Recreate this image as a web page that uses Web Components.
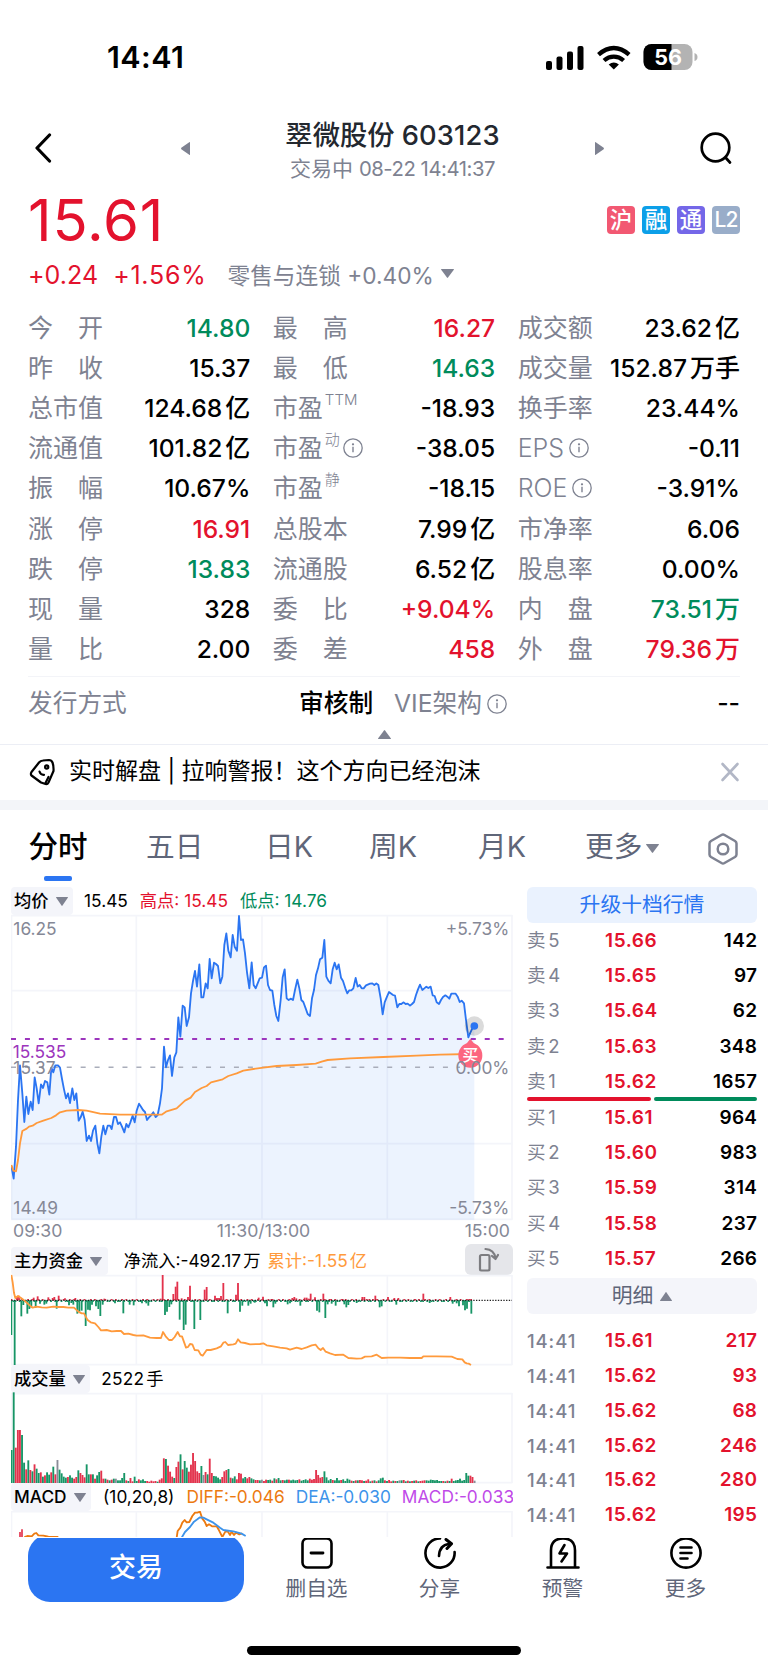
<!DOCTYPE html>
<html lang="zh-CN">
<head>
<meta charset="utf-8">
<title>翠微股份 603123</title>
<style>
  :root {
    --red: #e3122d;
    --green: #008b5b;
    --blue: #2b75f2;
    --grey: #7e8291;
    --slate: #5f6679;
    --line: #f4f5fa;
  }
  html, body { margin: 0; padding: 0; }
  body {
    width: 768px;
    height: 1669px;
    overflow: hidden;
    background: #fff;
    color: #000;
    font-family: Inter, "Noto Sans CJK SC", sans-serif;
    font-size: 25px;
  }
</style>
</head>
<body>
<stock-page></stock-page>

<script>
const define = (name, html, setup) => {
  const tpl = document.createElement('template');
  tpl.innerHTML = html;
  customElements.define(name, class extends HTMLElement {
    constructor() {
      super();
      this.attachShadow({ mode: 'open' }).appendChild(tpl.content.cloneNode(true));
    }
    connectedCallback() {
      if (setup) setup(this.shadowRoot, this);
    }
  });
};

// --- Small pieces ---

define('info-icon', `
  <style>:host { display: inline-flex; } svg { display: block; }</style>
  <svg width="20" height="20" viewBox="0 0 20 20" fill="none" stroke="#7e8291" stroke-width="1.3">
    <circle cx="10" cy="10" r="9.2"/><path d="M10 8.7V14.2" stroke-width="1.4"/><circle cx="10" cy="6.3" r=".5"/>
  </svg>`);

define('tri-mark', `
  <style>
    :host { display: inline-block; flex: none; }
    svg { display: block; width: 100%; height: 100%; }
  </style>
  <svg viewBox="0 0 12 9" preserveAspectRatio="none"><path fill="#7e8291"/></svg>`,
(root, el) => {
  const paths = {
    down: 'M.4 0H11.6Q12.2 0 11.8.7L6.5 8.6Q6 9.2 5.5 8.6L.2.7Q-.2 0 .4 0Z',
    up: 'M.4 9H11.6Q12.2 9 11.8 8.3L6.5.4Q6-.2 5.5.4L.2 8.3Q-.2 9 .4 9Z',
    left: 'M12 .4V8.6Q12 9.2 11 8.8L.4 5Q-.2 4.5.4 4L11 .2Q12-.2 12 .4Z',
    right: 'M0 .4V8.6Q0 9.2 1 8.8L11.6 5Q12.2 4.5 11.6 4L1 .2Q0-.2 0 .4Z'
  };
  root.querySelector('path').setAttribute('d', paths[el.getAttribute('dir') || 'down']);
});

define('market-badge', `
  <style>
    :host {
      display: flex; align-items: center; justify-content: center;
      width: 28px; height: 28px; border-radius: 4px;
      color: #fff; font-size: 22.5px; font-weight: 500; line-height: 26px;
      padding-bottom: 1px; box-sizing: border-box;
    }
  </style>
  <slot></slot>`);

define('pane-label', `
  <style>
    :host {
      display: inline-flex; align-items: center; gap: 7px; height: 28px;
      padding: 0 5.5px 0 3px; background: #f4f5fa; border-radius: 4px;
      font-size: 17.3px; font-weight: 500; line-height: 28px; flex: none;
    }
    tri-mark { width: 12px; height: 9px; }
    span { margin-top: -1px; }
  </style>
  <span><slot></slot></span><tri-mark></tri-mark>`);

// --- Status bar ---

define('status-bar', `
  <style>
    :host { display: flex; align-items: center; height: 114px; padding: 0 71px 0 107px; box-sizing: border-box; justify-content: space-between; }
    time { font-size: 30.5px; font-weight: 600; letter-spacing: .4px; margin-top: -1px; }
    svg { display: block; margin-top: -1px; }
  </style>
  <time>14:41</time>
  <svg width="153" height="28" viewBox="0 0 153 28" style="margin-right:-1px">
    <rect x="1" y="18" width="6" height="9" rx="2"/>
    <rect x="11.5" y="13.5" width="6" height="13.5" rx="2"/>
    <rect x="22" y="8.5" width="6" height="18.5" rx="2"/>
    <rect x="32.5" y="3" width="6" height="24" rx="2"/>
    <g fill="none" stroke="#000" stroke-width="4.3">
      <path d="M53.5 11.6Q61 5 68.8 5Q76.6 5 84.1 11.6"/>
      <path d="M59 17.5Q63.5 13.6 68.8 13.6Q74.1 13.6 78.6 17.5"/>
    </g>
    <path d="M68.8 26.5L63.7 21.4Q68.8 17.4 73.9 21.4Z"/>
    <clipPath id="cell"><rect x="98.5" y="1" width="49" height="26" rx="8"/></clipPath>
    <g clip-path="url(#cell)"><rect x="98" width="51" height="28" fill="#b3b3b3"/><rect x="98" width="28.5" height="28"/></g>
    <path d="M149.5 10Q152.5 11 152.5 14T149.5 18Z" fill="#b3b3b3"/>
    <text x="123" y="21.6" text-anchor="middle" fill="#fff" font-size="21.5" font-weight="700">56</text>
  </svg>`);

// --- Title bar ---

define('title-bar', `
  <style>
    :host { display: grid; grid-template-columns: 35px 120px 1fr 104px auto; height: 66px; padding: 0 35px; align-items: center; }
    svg { display: block; margin-top: -1px; }
    .title { display: flex; flex-direction: column; align-items: center; }
    h1 { margin: 0; font-size: 27.3px; font-weight: 500; line-height: 38px; color: #23282f; white-space: pre; padding-top: 3px; }
    h1 span { letter-spacing: .1px; font-size: 27.3px; }
    p { margin: 0; font-size: 21px; line-height: 27px; color: var(--grey); white-space: pre; }
    p span { font-size: 20.3px; letter-spacing: -.45px; }
    tri-mark { width: 9px; height: 13px; margin-top: 0; }
    .search { margin-left: auto; }
  </style>
  <svg width="18" height="30" viewBox="0 0 18 30" fill="none" stroke="#000" stroke-width="3.2" stroke-linecap="round" stroke-linejoin="round"><path d="M14.5 2L2 15L14.5 28"/></svg>
  <tri-mark dir="left" style="justify-self:end"></tri-mark>
  <div class="title"><h1>翠微股份 <span>603123</span></h1><p>交易中 <span>08-22 14:41:37</span></p></div>
  <tri-mark dir="right"></tri-mark>
  <svg class="search" width="34" height="34" viewBox="0 0 34 34" fill="none" stroke="#000" stroke-width="2.7" stroke-linecap="round"><circle cx="16.5" cy="16.5" r="13.8"/><path d="M26.5 26.5L31 31.5"/></svg>`);

// --- Price header ---

define('price-head', `
  <style>
    :host { display: block; padding: 10px 28px 0; height: 128px; box-sizing: border-box; }
    .top { display: flex; align-items: center; justify-content: space-between; height: 60px; }
    .price { font-size: 58px; line-height: 60px; color: var(--red); letter-spacing: .8px; }
    .tags { display: flex; gap: 7px; }
    .sub { display: flex; align-items: center; height: 49px; color: var(--red); }
    .sub b { font-weight: 400; font-size: 25px; letter-spacing: .05px; }
    .sub b + b { margin-left: 15px; letter-spacing: .75px; }
    .sub span { color: var(--grey); font-size: 22.7px; margin-left: 21px; white-space: pre; }
    tri-mark { width: 13px; height: 9px; margin: 0 0 2px 7px; }
  </style>
  <div class="top">
    <div class="price">15.61</div>
    <div class="tags">
      <market-badge style="background:#f25872">沪</market-badge>
      <market-badge style="background:#0c9fe8">融</market-badge>
      <market-badge style="background:#7467e8">通</market-badge>
      <market-badge style="background:#99adc9;letter-spacing:-1px;font-size:21px">L2</market-badge>
    </div>
  </div>
  <div class="sub"><b>+0.24</b><b>+1.56%</b><span>零售与连锁 +0.40%</span><tri-mark></tri-mark></div>`);

// --- Quote table ---

define('quote-cell', `
  <style>
    :host { display: flex; align-items: center; justify-content: space-between; height: 40.1px; line-height: 40px; white-space: nowrap; }
    .k { display: flex; align-items: center; color: var(--grey); }
    .k sup { font-size: 15px; line-height: 20px; margin: -16px 0 0 2px; font-weight: 300; }
    .k.latin { font-weight: 300; }
    .v { font-size: 24.6px; font-weight: 500; }
    .v i { font-style: normal; font-size: 25px; margin-left: 3px; }
    .up { color: var(--red); }
    .down { color: var(--green); }
    info-icon { margin-left: 3px; }
    .latin info-icon { margin-left: 5px; }
  </style>
  <span class="k"></span><span class="v"></span>`,
(root, el) => {
  const [key, sup, info, value, unit, tone] = el.row;
  const k = root.querySelector('.k');
  k.innerHTML = key + (sup ? `<sup>${sup}</sup>` : '') + (info ? '<info-icon></info-icon>' : '');
  if (/^[A-Z]/.test(key)) k.classList.add('latin');
  const v = root.querySelector('.v');
  v.innerHTML = value + (unit ? `<i>${unit}</i>` : '');
  if (tone) v.classList.add(tone);
});

const QUOTES = [
  ['今　开', '', 0, '14.80', '', 'down'], ['最　高', '', 0, '16.27', '', 'up'], ['成交额', '', 0, '23.62', '亿'],
  ['昨　收', '', 0, '15.37'], ['最　低', '', 0, '14.63', '', 'down'], ['成交量', '', 0, '152.87', '万手'],
  ['总市值', '', 0, '124.68', '亿'], ['市盈', 'TTM', 0, '-18.93'], ['换手率', '', 0, '23.44%'],
  ['流通值', '', 0, '101.82', '亿'], ['市盈', '动', 1, '-38.05'], ['EPS', '', 1, '-0.11'],
  ['振　幅', '', 0, '10.67%'], ['市盈', '静', 0, '-18.15'], ['ROE', '', 1, '-3.91%'],
  ['涨　停', '', 0, '16.91', '', 'up'], ['总股本', '', 0, '7.99', '亿'], ['市净率', '', 0, '6.06'],
  ['跌　停', '', 0, '13.83', '', 'down'], ['流通股', '', 0, '6.52', '亿'], ['股息率', '', 0, '0.00%'],
  ['现　量', '', 0, '328'], ['委　比', '', 0, '+9.04%', '', 'up'], ['内　盘', '', 0, '73.51', '万', 'down'],
  ['量　比', '', 0, '2.00'], ['委　差', '', 0, '458', '', 'up'], ['外　盘', '', 0, '79.36', '万', 'up']
];

define('quote-table', `
  <style>
    :host { display: block; padding: 0 28px; height: 436px; box-sizing: border-box; }
    .grid { display: grid; grid-template-columns: repeat(3, 1fr); column-gap: 22.5px; height: 368px; align-content: start; }
    .more { display: grid; grid-template-columns: 271px 95px 1fr auto; align-items: center; border-top: 1px solid #f3f4f8; height: 56px; font-size: 24.7px; line-height: 30px; padding-bottom: 3px; box-sizing: border-box; }
    .more span { color: var(--grey); display: flex; align-items: center; }
    .more b { font-weight: 500; }
    info-icon { margin: 2px 0 0 5px; }
    tri-mark { display: block; width: 13px; height: 9px; margin: -2px auto 0; }
  </style>
  <div class="grid"></div>
  <div class="more"><span>发行方式</span><b>审核制</b><span>VIE架构<info-icon></info-icon></span><b>--</b></div>
  <tri-mark dir="up"></tri-mark>`,
(root) => {
  const grid = root.querySelector('.grid');
  for (const row of QUOTES) {
    const cell = document.createElement('quote-cell');
    cell.row = row;
    grid.appendChild(cell);
  }
});

// --- News strip ---

define('news-strip', `
  <style>
    :host { display: flex; align-items: center; padding: 0 28px 0 29px; border-top: 1px solid #eceef5; border-bottom: 10px solid #f3f5f9; height: 55px; }
    svg { display: block; margin-top: -2px; }
    span { flex: 1; margin: -3px 0 0 14px; font-size: 23px; line-height: 30px; white-space: pre; }
  </style>
  <svg width="26" height="28" viewBox="0 0 26 28" fill="none" stroke="#000" stroke-width="2.2" stroke-linecap="round" stroke-linejoin="round">
    <path d="M14 2.500L20 2Q22.500 2 23.500 4.500Q24.800 8 24.500 13L19.500 24.500Q18.500 26.500 16.500 26L12 24.500L2.500 17.500Q1.300 16 2.500 14L10 4.500Q11.500 2.600 14 2.500Z"/>
    <path d="M16.500 25L19.500 19"/><circle cx="17.700" cy="9" r="1.600"/><path d="M10.500 13.500Q11.500 17 15 16.800"/>
  </svg>
  <span>实时解盘 | 拉响警报！这个方向已经泡沫</span>
  <svg width="20" height="20" viewBox="0 0 20 20" stroke="#b2b7c6" stroke-width="2.6" stroke-linecap="round"><path d="M2.500 2L17.500 18M17.500 2L2.500 18"/></svg>`);

// --- Period tabs ---

define('period-tabs', `
  <style>
    :host { display: grid; grid-template-columns: 118px 119px 104px 109px 107px 1fr auto; padding: 0 30px 0 28px; height: 77px; align-items: center; color: var(--slate); font-size: 28.7px; line-height: 34px; }
    :host > span { margin-top: -2px; }
    span:not(.on) { margin-top: -3px; }
    .on { color: #000; font-weight: 500; font-size: 29.5px; display: flex; flex-direction: column; width: 60px; align-items: center; line-height: 40px; padding-top: 12px; }
    .on::after { content: ""; width: 28px; height: 5px; margin-top: 10px; border-radius: 2px; background: var(--blue); }
    .drop { display: flex; align-items: center; gap: 4px; }
    tri-mark { width: 13px; height: 9px; margin-top: 2px; }
    svg { display: block; }
  </style>
  <span class="on">分时</span><span>五日</span><span>日K</span><span>周K</span><span>月K</span>
  <span class="drop">更多<tri-mark></tri-mark></span>
  <svg width="30" height="32" viewBox="0 0 30 32" fill="none" stroke="#7e8291" stroke-width="2.5" stroke-linejoin="round">
    <path d="M13.500 2Q15 1.200 16.500 2L27 8Q28.500 9 28.500 10.500V21.500Q28.500 23 27 24L16.500 30Q15 30.800 13.500 30L3 24Q1.500 23 1.500 21.500V10.500Q1.500 9 3 8Z"/><circle cx="15" cy="16" r="5.300"/>
  </svg>`);

// --- Charts ---
// Plot coordinates are thirds of a pixel, x measured from the page's left edge.

const PRICE = '34,857 41,896 48,800 54,660 60,556 67,640 73,726 79,650 85,702 92,665 98,690 104,592 110,625 116,670 123,613 129,624 135,603 142,607 148,644 154,563 160,577 166,556 174,556 180,563 186,597 192,628 198,655 204,640 210,669 217,625 223,660 229,640 236,722 242,712 248,695 254,720 260,783 267,767 273,783 279,752 286,737 292,790 298,820 304,770 310,737 316,763 323,737 330,737 335,747 342,711 348,711 354,732 360,727 366,740 373,757 379,732 385,742 391,727 398,707 404,727 410,692 417,671 423,680 429,690 435,696 441,720 447,712 454,705 460,697 467,711 473,705 480,670 486,625 492,500 498,562 504,540 510,526 516,588 523,532 529,517 535,412 541,470 548,377 554,382 560,438 567,412 573,340 579,303 585,273 591,320 598,253 604,352 610,352 617,310 623,325 629,237 635,295 642,248 648,252 654,258 661,310 667,290 673,195 679,160 685,212 692,232 698,165 704,200 711,212 717,108 723,180 729,178 735,220 741,277 748,325 755,247 761,315 767,325 773,310 779,295 786,293 792,262 798,257 804,315 810,330 817,332 823,375 829,408 835,423 842,360 848,292 854,268 860,355 866,360 873,356 879,360 885,330 892,299 898,325 904,360 910,366 917,385 923,402 930,408 936,355 942,330 948,285 954,265 960,238 967,233 973,180 979,290 985,302 992,310 998,268 1004,248 1010,268 1016,253 1023,293 1029,303 1036,325 1042,340 1048,331 1054,331 1060,325 1067,294 1073,320 1079,315 1085,325 1091,325 1098,316 1110,311 1117,310 1123,315 1129,310 1135,315 1142,355 1148,403 1154,367 1161,350 1167,336 1179,345 1185,347 1192,382 1198,372 1204,372 1210,367 1217,372 1223,371 1230,377 1236,372 1242,366 1248,345 1254,328 1260,314 1267,330 1273,325 1279,320 1285,324 1292,320 1298,346 1304,348 1310,367 1317,372 1323,360 1329,351 1336,346 1342,350 1348,356 1354,341 1367,341 1373,350 1379,366 1385,362 1392,370 1398,420 1405,472 1411,458 1417,445 1423,438';
const AVERAGE = '34,855 40,872 48,874 54,840 60,790 67,753 80,746 87,740 98,737 110,729 130,722 154,714 168,706 180,697 200,692 235,690 260,692 300,701 360,704 485,704 500,694 530,685 555,662 572,653 585,636 605,624 620,618 633,607 668,598 685,588 710,580 730,572 760,567 790,563 830,558 890,555 947,551 965,545 983,540 1050,535 1150,531 1250,527 1320,524 1410,522';
const FUND_LINE = '34,118 38,140 42,172 46,187 54,181 62,186 70,192 80,201 90,210 98,216 110,213 125,215 140,216 160,213 175,214 190,214 205,216 222,216 235,228 245,233 252,233 262,252 272,260 285,263 295,274 303,284 320,283 335,287 350,286 363,286 372,295 385,294 400,298 410,300 430,299 450,306 470,307 483,307 489,289 497,302 507,313 516,313 524,304 533,289 540,302 546,302 558,336 564,334 570,325 577,326 584,343 595,344 602,357 608,360 620,343 632,343 650,338 663,332 670,321 676,319 684,328 700,326 707,324 714,311 722,320 735,322 750,326 780,325 790,323 800,329 820,332 840,336 860,338 870,342 890,336 905,340 920,335 935,329 947,327 955,338 962,343 969,337 977,348 990,353 1005,358 1030,357 1045,367 1070,369 1085,368 1095,363 1115,362 1130,357 1145,367 1165,366 1200,366 1230,367 1265,367 1270,362 1310,362 1355,363 1372,370 1387,371 1394,380 1400,383 1406,384 1413,388';
const FUND_BARS = '34,298 44,388 64,242 70,208 82,234 88,220 94,216 107,216 120,204 133,207 139,204 170,219 207,209 214,202 220,207 232,234 238,228 245,225 257,271 264,222 270,224 276,207 288,212 295,220 301,241 308,207 345,203 370,233 389,207 401,209 426,203 439,203 445,210 495,238 501,228 508,214 514,206 539,252 551,283 557,267 583,280 601,253 683,233 720,228 727,210 745,210 752,204 764,201 795,203 801,212 820,215 826,204 863,206 870,203 901,210 951,225 958,230 976,247 983,206 995,204 1007,210 1033,206 1039,215 1045,208 1070,202 1139,215 1145,212 1189,207 1289,202 1358,204 1370,203 1377,212 1389,209 1395,224 1401,219 1414,234 51,184 57,180 101,186 113,182 145,185 158,187 163,184 176,180 195,188 226,187 313,189 488,118 482,189 520,175 527,153 532,138 545,188 564,184 570,150 614,162 620,154 645,180 651,187 657,187 663,181 670,142 708,177 714,142 776,186 789,183 814,190 877,187 883,184 889,188 914,186 920,186 926,189 932,174 945,185 970,174 989,190 1028,190 1087,184 1093,184 1108,190 1126,180 1164,184 1183,187 1195,187 1245,190 1270,174 1351,184 1408,190';
// volume bars: top of each minute's bar, then r/g/n for up, down, flat
const VOLUME = '647g 474g 640r 587r 587r 602g 685g 705r 678g 707r 711g 690r 703g 716g 714r 727g 723r 714g 721g 714r 697g 720r 677n 706g 717g 727g 730g 728r 723g 730g 733r 728r 708g 716r 722r 729r 690g 720g 720r 720g 733r 723g 713g 709r 733r 733g 736r 738g 736r 733g 733n 738g 738g 731g 716g 738r 740g 731r 741r 727g 740g 735r 738g 735g 740g 740r 742r 739r 741r 740r 742g 736r 732r 672r 674g 694r 712r 727r 731g 698r 682r 660g 705r 680g 700g 712r 691r 656r 680r 711r 716r 695g 722n 713r 720g 673r 716r 725g 726g 730g 735g 728r 711r 707r 704g 730r 732g 726g 735r 716r 718r 732g 728g 732r 728r 732g 735g 737r 737r 738g 736n 740r 736r 737g 736g 739r 732g 735r 731g 738g 737r 738g 736g 736r 738g 736g 738g 737g 735r 739g 737g 735g 738g 733r 736r 734r 707r 722r 730r 728r 711g 729g 738g 734g 737r 738g 731g 738g 737r 735g 740g 733g 736g 739r 740g 738r 738g 737r 738r 740g 739r 735r 741g 739r 738g 741r 738g 732g 730g 738r 740g 737r 741r 739g 740r 740g 738n 738g 737r 741g 739r 741g 740r 739g 738r 741g 740r 739r 738r 738g 739g 736g 737g 738g 737g 740g 740g 740r 741g 739r 740g 733r 740g 738g 737g 733g 739g 737g 716g 724g 724r 728r 739n';

const RED = '#e3324c', GREEN = '#179566', ORANGE = '#ff9a3c';
const pts = s => s.split(' ').map(p => p.split(',').map(Number));
const gridLines = (top, bottom, rows) =>
  [34.5, 409, 786, 1162, 1536].map(x => `<path d="M${x} ${top}V${bottom}"/>`).join('') +
  rows.map(y => `<path d="M33 ${y}H1537"/>`).join('');

const PLOT_STYLE = `
  <style>
    :host { display: block; }
    svg { display: block; overflow: visible; }
    .grid { stroke: #f4f5fa; stroke-width: 5; fill: none; }
    polyline { fill: none; stroke-width: 5.5; stroke-linejoin: round; }
    text { font-size: 52px; fill: #858896; }
  </style>`;

define('price-chart', PLOT_STYLE + '<div></div>', (root) => {
  root.querySelector('div').innerHTML = `
  <svg width="502" height="304" viewBox="33 105 1506 912">
    <g class="grid">${gridLines(105, 1019, [107, 332, 791, 1018])}</g>
    <path d="M34,1019L${PRICE.split(' ').join('L')}L1423,1019Z" fill="#2b75f2" opacity=".09"/>
    <path d="M33 562H1380" stroke="#a9adba" stroke-width="4.500" stroke-dasharray="15 26.800"/>
    <path d="M33 477H1530" stroke="#9c35bd" stroke-width="6" stroke-dasharray="15 26.800"/>
    <polyline points="${PRICE}" stroke="#2b75f2"/>
    <polyline points="${AVERAGE}" stroke="${ORANGE}"/>
    <text x="40" y="164">16.25</text>
    <text x="40" y="1003">14.49</text>
    <text x="38" y="533" style="fill:#9c35bd">15.535</text>
    <text x="40" y="582">15.37</text>
    <circle cx="1423" cy="438" r="29" fill="#000" opacity=".14"/>
    <circle cx="1423" cy="438" r="11.500" fill="#2b75f2"/>
    <path d="M1411 476Q1418 489 1433 496Q1447 508 1447 527A36 36 0 0 1 1375 527Q1375 508 1389 496Q1404 489 1411 476Z" fill="#fc667f"/>
    <text x="1411" y="542" text-anchor="middle" style="font-size:48px;font-weight:500;fill:#fff">买</text>
    <text x="1528" y="164" text-anchor="end">+5.73%</text>
    <text x="1528" y="582" text-anchor="end">0.00%</text>
    <text x="1528" y="1003" text-anchor="end">-5.73%</text>
  </svg>`;
});

define('fund-chart', PLOT_STYLE + '<div></div>', (root) => {
  const bars = pts(FUND_BARS).map(([x, y]) =>
    `<path d="M${x} 194V${y}" stroke="${y > 194 ? GREEN : RED}"/>`).join('');
  let ticks = '';
  for (let i = 0; i < 221; i++) {
    const x = 34 + i * 6.27;
    const up = (i * 7) % 5 < 2;
    ticks += `<path d="M${x} 194v${up ? -4 : 5}" stroke="${up ? RED : GREEN}"/>`;
  }
  root.querySelector('div').innerHTML = `
  <svg width="502" height="90" viewBox="33 118 1506 270">
    <g class="grid">${gridLines(118, 388, [120, 387])}</g>
    <g stroke-width="5.500">${ticks}${bars}</g>
    <path d="M34 194H1536" stroke="#222" stroke-width="4" stroke-dasharray="4 4.200"/>
    <polyline points="${FUND_LINE}" stroke="${ORANGE}"/>
  </svg>`;
});

define('volume-chart', PLOT_STYLE + '<div></div>', (root) => {
  const colors = { r: RED, g: GREEN, n: '#8a8d98' };
  const bars = VOLUME.split(' ').map((v, i, all) => {
    const top = parseInt(v, 10);
    const x = 32 + i * (1389 / (all.length - 1));
    return `<rect x="${x.toFixed(1)}" y="${top}" width="5.600" height="${746 - top}" fill="${colors[v.slice(-1)]}"/>`;
  }).join('');
  root.querySelector('div').innerHTML = `
  <svg width="502" height="90" viewBox="33 476 1506 270">
    <g class="grid">${gridLines(476, 746, [478, 745])}</g>${bars}
  </svg>`;
});

define('macd-chart', PLOT_STYLE + `
  <svg width="502" height="26" viewBox="33 830 1506 78" style="overflow:hidden">
    <g class="grid">${gridLines(830, 910, [832])}</g>
    <path d="M60 908V893M66 908V885" stroke="#e3324c" stroke-width="5"/>
    <polyline stroke="#ec7a10" points="73,908 82,905 95,906 103,898 109,896 115,903 130,904 145,907 175,908"/>
    <polyline stroke="#ec7a10" points="530,910 533,890 541,880 547,865 554,857 560,864 568,863 577,845 585,835 592,835 600,832 607,853 614,862 620,875 627,870 636,876 650,876 657,888 667,908 676,892 684,892 690,902 695,892 702,902 708,895 718,900 726,897"/>
    <polyline stroke="#3d93ea" points="545,910 555,893 570,878 582,862 592,855 600,849 610,850 620,855 640,865 660,880 670,887 700,891 725,898 737,905"/>
  </svg>`);

define('chart-column', `
  <style>
    :host { display: flex; flex-direction: column; width: 502px; height: 651px; overflow: hidden; }
    .head { display: flex; align-items: center; height: 28px; flex: none; font-size: 17.3px; line-height: 26px; white-space: nowrap; overflow: hidden; }
    .head > span { padding-bottom: 1px; }
    .times { display: flex; justify-content: space-between; height: 27px; line-height: 24px; color: #858896; font-size: 17.7px; padding: 0 3px 0 2px; }
    .rotate { display: flex; align-items: center; justify-content: center; width: 48px; height: 31px; margin: -4px 0 -1px auto; border-radius: 6px; background: #e5e6ea; }
    .orange { color: #ff9a3c; }
    .unit { margin-left: 2px; }
  </style>
  <div class="head"><pane-label>均价</pane-label><span style="margin-left:11px">15.45</span><span style="margin-left:12px;color:var(--red)">高点: 15.45</span><span style="margin-left:12px;color:var(--green)">低点: 14.76</span></div>
  <price-chart></price-chart>
  <div class="times"><span>09:30</span><span>11:30/13:00</span><span>15:00</span></div>
  <div class="head" style="margin-top:1px;overflow:visible"><pane-label>主力资金</pane-label><span style="margin-left:16px">净流入:-492.17<span class="unit">万</span></span><span class="orange" style="margin-left:7px">累计:-1.55<span class="unit">亿</span></span>
    <div class="rotate"><svg width="24" height="26" viewBox="0 0 24 26" fill="none" stroke="#7c7c80" stroke-width="2.2" stroke-linecap="round" stroke-linejoin="round"><rect x="3" y="8" width="9.500" height="15.500" rx="1.500"/><path d="M8.500 2Q17 2.500 18.500 11M15 9L18.500 12L21 8"/></svg></div>
  </div>
  <fund-chart></fund-chart>
  <div class="head"><pane-label>成交量</pane-label><span style="margin-left:11px;letter-spacing:.2px">2522<span class="unit">手</span></span></div>
  <volume-chart></volume-chart>
  <div class="head"><pane-label>MACD</pane-label><span style="margin-left:12px">(10,20,8)</span><span style="margin-left:12px;color:#ec7a10">DIFF:-0.046</span><span style="margin-left:11px;color:#3d93ea">DEA:-0.030</span><span style="margin-left:11px;color:#c04ae8">MACD:-0.033</span></div>
  <macd-chart></macd-chart>`);

// --- Order book ---

define('book-row', `
  <style>
    :host { display: grid; grid-template-columns: 78px 1fr auto; align-items: center; height: 35.3px; font-size: 19px; line-height: 30px; font-weight: 600; white-space: pre; }
    :host([trade]) { height: 34.9px; }
    .n { color: var(--grey); font-weight: 400; font-size: 18.5px; word-spacing: -2.5px; margin-top: -2px; }
    :host([trade]) .n { font-weight: 500; letter-spacing: .9px; margin-top: 0; }
    .p { color: var(--red); letter-spacing: .6px; }
    .q { letter-spacing: .3px; margin-right: -.3px; }
    :host([trade]) .q { color: var(--red); }
  </style>
  <span class="n"></span><span class="p"></span><span class="q"></span>`,
(root, el) => {
  ['n', 'p', 'q'].forEach((c, i) => { root.querySelector('.' + c).textContent = el.row[i]; });
});

define('order-book', `
  <style>
    :host { display: block; width: 230px; height: 651px; overflow: hidden; }
    .btn { display: flex; align-items: center; justify-content: center; height: 36px; line-height: 34px; border-radius: 6px; font-size: 20.8px; padding-bottom: 1px; box-sizing: border-box; }
    .up { background: #eaf2fe; color: var(--blue); }
    .detail { background: #f4f5fa; color: var(--slate); gap: 7px; margin-top: 2px; margin-bottom: 9px; }
    .ratio { display: flex; gap: 3px; height: 3.5px; margin: -2px 0 -1px; }
    .ratio i { border-radius: 2px; background: var(--red); width: 124px; }
    .ratio i + i { flex: 1; background: var(--green); }
    tri-mark { width: 12px; height: 9px; margin-top: 2px; }
  </style>
  <div class="btn up">升级十档行情</div>
  <div class="asks"></div>
  <div class="ratio"><i></i><i></i></div>
  <div class="bids"></div>
  <div class="btn detail">明细<tri-mark dir="up"></tri-mark></div>
  <div class="trades"></div>`,
(root) => {
  const fill = (sel, rows, trade) => rows.forEach(row => {
    const el = document.createElement('book-row');
    el.row = row;
    if (trade) el.setAttribute('trade', '');
    root.querySelector(sel).appendChild(el);
  });
  fill('.asks', [['卖 5', '15.66', '142'], ['卖 4', '15.65', '97'], ['卖 3', '15.64', '62'], ['卖 2', '15.63', '348'], ['卖 1', '15.62', '1657']]);
  fill('.bids', [['买 1', '15.61', '964'], ['买 2', '15.60', '983'], ['买 3', '15.59', '314'], ['买 4', '15.58', '237'], ['买 5', '15.57', '266']]);
  fill('.trades', [['14:41', '15.61', '217'], ['14:41', '15.62', '93'], ['14:41', '15.62', '68'], ['14:41', '15.62', '246'], ['14:41', '15.62', '280'], ['14:41', '15.62', '195']], true);
});

// --- Bottom bar ---

define('action-item', `
  <style>
    :host { display: flex; flex-direction: column; align-items: center; width: 123px; color: var(--slate); font-size: 20.7px; line-height: 28px; margin-top: -3px; }
    ::slotted(svg) { display: block; width: 36px; height: 36px; margin-bottom: 4px; fill: none; stroke: #000; stroke-width: 2.6; stroke-linecap: round; stroke-linejoin: round; }
  </style>
  <slot name="icon"></slot><slot></slot>`);

define('bottom-bar', `
  <style>
    :host { display: flex; height: 108px; padding-left: 28px; overflow: hidden; background: #fff; }
    .trade { width: 216px; height: 68px; margin: -4px 11px 0 0; border-radius: 22px; background: var(--blue); color: #fff; font-size: 27px; font-weight: 500; line-height: 67px; text-align: center; }
  </style>
  <div class="trade">交易</div>
  <action-item><svg slot="icon" viewBox="0 0 36 36"><rect x="3.500" y="3.500" width="29" height="29" rx="5"/><path d="M12 18H24" stroke-width="2.800"/></svg>删自选</action-item>
  <action-item><svg slot="icon" viewBox="0 0 36 36"><path d="M18 3.400A14.600 14.600 0 1 0 32.600 17"/><path d="M17 21Q17.500 10 27 9"/><path d="M24 4.500L29.500 8.800L25 13.500" stroke-width="3"/></svg>分享</action-item>
  <action-item><svg slot="icon" viewBox="0 0 36 36"><path d="M2.500 32.500H33.500M6 32V15.500Q6 3.500 18 3.500T30 15.500V32"/><path d="M19.500 10L14.500 18.500H22L16.500 26.500"/></svg>预警</action-item>
  <action-item><svg slot="icon" viewBox="0 0 36 36"><circle cx="18" cy="18" r="14.600"/><path d="M12.500 12.500H23.500M12.500 18H23.500M12.500 23.500H19.500"/></svg>更多</action-item>`);

define('stock-page', `
  <style>
    :host { display: block; }
    .market { display: flex; gap: 14px; padding-left: 11px; height: 650.5px; overflow: hidden; }
    .home { width: 274px; height: 9px; margin: 0 auto; border-radius: 5px; background: #000; }
  </style>
  <status-bar></status-bar>
  <title-bar></title-bar>
  <price-head></price-head>
  <quote-table></quote-table>
  <news-strip></news-strip>
  <period-tabs></period-tabs>
  <div class="market"><chart-column></chart-column><order-book></order-book></div>
  <bottom-bar></bottom-bar>
  <div class="home"></div>`);
</script>
</body>
</html>
